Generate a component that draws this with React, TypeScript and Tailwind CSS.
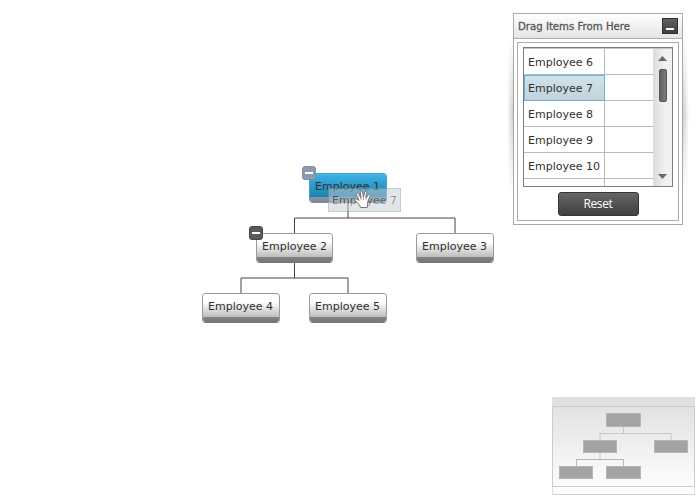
import React from "react";

const font = "font-['DejaVu_Sans','Liberation_Sans',sans-serif]";

type NodeProps = { label: string; place: string; collapse?: boolean; active?: boolean };

function OrgNode({ label, place, collapse, active }: NodeProps) {
  return (
    <div className={`absolute h-[30px] ${place}`}>
      <div
        className={`flex h-full w-full flex-col overflow-hidden rounded-[4px] border ${
          active ? "border-[#4c9fc6] border-b-[#7d8b9b]" : "border-[#999] border-b-[#777]"
        }`}
      >
        <div
          className={`flex h-[23px] items-center pl-[5px] bg-linear-to-b ${
            active ? "from-[#3db3e8] to-[#1b82ac]" : "from-white from-35% to-[#bdbdbd]"
          }`}
        >
          <Label text={label} />
        </div>
        <div className={`flex-1 bg-linear-to-b ${active ? "from-[#8695a7] to-[#7b899a]" : "from-[#858383] to-[#777474]"}`} />
      </div>
      {collapse && (
        <div
          className={`absolute -left-[7px] -top-[7px] flex h-[14px] w-[14px] items-center justify-center rounded-[3px] border ${
            active ? "border-[#8291a3] bg-[#8c9bad]" : "border-[#484848] bg-[#5a5a5a]"
          }`}
        >
          <div className="h-[2px] w-[8px] bg-white" />
        </div>
      )}
    </div>
  );
}

function Label({ text, color = "#303030" }: { text: string; color?: string }) {
  return (
    <svg width="66" height="16" className="block shrink-0 overflow-visible">
      <text x="0" y="12" fontSize="11" fill={color} textLength={text.length > 10 ? 72 : 65} lengthAdjust="spacing">
        {text}
      </text>
    </svg>
  );
}

function Hand() {
  return (
    <svg className="absolute left-[354px] top-[190px]" width="18" height="18" viewBox="0 0 18 18">
      <path
        d="M6.5 17.5 L5.5 15 L1.2 10.5 C.2 9.3 1.6 8.2 2.8 9 L5 10.5 L2.5 4.5 C2 3 3.8 2.3 4.5 3.7 L7 8 L6.3 2 C6.2 .5 8.2 .3 8.5 1.8 L9.5 7.5 L10.5 2.3 C10.8 .9 12.5 1.2 12.4 2.7 L12 8 L14.5 4.7 C15.4 3.6 16.8 4.5 16.2 5.8 L13.8 11.5 L13.2 17.5 Z"
        fill="#fff"
        stroke="#777"
        strokeWidth="1"
        strokeLinejoin="round"
      />
      <path d="M7 8v2 M9.5 7.5v2.5 M12 8v2" stroke="#999" strokeWidth=".8" />
    </svg>
  );
}

function Row({ label, active }: { label: string; active?: boolean }) {
  return (
    <div className="flex h-[26px] shrink-0">
      <div
        className={`flex w-[81px] shrink-0 items-center border-b border-r pl-[4px] ${
          active
            ? "border-[#65b7ce] bg-linear-to-b from-[#cee4ec] to-[#c2d2da] shadow-[inset_1px_1px_0_#65b7ce]"
            : "border-[#bababa]"
        }`}
      >
        {label && <Label text={label} />}
      </div>
      <div className="flex-1 border-b border-[#bababa]" />
    </div>
  );
}

function Palette() {
  return (
    <div className="absolute left-[513px] top-[13px] flex h-[212px] w-[170px] flex-col border border-[#aaa] bg-white">
      <div className="absolute -left-[7px] top-[20px] h-[160px] w-[6px] bg-linear-to-l from-black/20 to-transparent mask-y-from-50% mask-y-to-100%" />
      <div className="absolute -right-[7px] top-[20px] h-[160px] w-[6px] bg-linear-to-r from-black/20 to-transparent mask-y-from-50% mask-y-to-100%" />
      <div className="flex h-[25px] shrink-0 items-center justify-between border-b border-[#aaa] bg-linear-to-b from-white to-[#e4e4e4] pl-[4px] pr-[4px]">
        <svg width="120" height="18" className="block overflow-visible">
          <text x="0" y="13" fontSize="11" fill="#555" stroke="#555" strokeWidth=".3" textLength="112" lengthAdjust="spacingAndGlyphs">
            Drag Items From Here
          </text>
        </svg>
        <button className="flex h-[16px] w-[16px] items-end justify-center border border-[#303030] bg-linear-to-b from-[#626262] to-[#3e3e3e] pb-[3px]">
          <span className="h-[2px] w-[8px] bg-white" />
        </button>
      </div>
      <div className="mx-[3px] mb-[3px] mt-[3px] flex flex-1 flex-col items-center border border-[#aaa] pt-[4px]">
        <div className="flex h-[140px] w-[150px] shrink-0 border border-[#7d7d7d]">
          <div className="flex w-[129px] flex-col overflow-hidden border-t border-[#c6c6c6]">
            <Row label="Employee 6" />
            <Row label="Employee 7" active />
            <Row label="Employee 8" />
            <Row label="Employee 9" />
            <Row label="Employee 10" />
            <Row label="" />
          </div>
          <div className="flex flex-1 flex-col items-center border-t border-[#c6c6c6] bg-linear-to-r from-[#dadada] to-[#f1f1f1] to-60%">
            <svg width="9" height="5" className="mt-[7px]">
              <path d="M0 5 4.5 0 9 5Z" fill="#686868" />
            </svg>
            <div className="mt-[8px] h-[33px] w-[8px] rounded-[2px] border border-[#555] bg-linear-to-r from-[#606060] to-[#7c7c7c]" />
            <svg width="9" height="5" className="mb-[7px] mt-auto">
              <path d="M0 0H9L4.5 5Z" fill="#686868" />
            </svg>
          </div>
        </div>
        <button className="mt-[5px] flex h-[24px] w-[81px] shrink-0 items-center justify-center rounded-[3px] border border-[#353535] bg-linear-to-b from-[#656565] to-[#414141] font-['Open_Sans',sans-serif] text-[12px] tracking-[-0.35px] leading-none text-white">
          Reset
        </button>
      </div>
    </div>
  );
}

function Overview() {
  return (
    <div className="absolute left-[552px] top-[397px] flex h-[98px] w-[143px] flex-col border border-[#e0e0e0] border-b-[#d2d2d2] bg-linear-to-b from-[#dfdfdf] to-white">
      <div className="h-[8px] shrink-0" />
      <div className="-mx-px h-[81px] shrink-0 border border-[#cbcbcb]">
        <svg width="141" height="79" className="block">
          <path d="M70.5 20v6M47 26.5H118V34M47 26v8M47 46v7" fill="none" stroke="#c7c7c7" />
          <path d="M23.5 59V52.5H70.5V59" fill="none" stroke="#b5b5b5" />
          <g fill="#a3a3a3" stroke="#b5b5b5">
            <rect x="53.5" y="6.5" width="34" height="13" />
            <rect x="30.5" y="33.5" width="33" height="12" />
            <rect x="101.5" y="33.5" width="33" height="12" />
            <rect x="6.5" y="59.5" width="33" height="12" />
            <rect x="53.5" y="59.5" width="34" height="12" />
          </g>
        </svg>
      </div>
    </div>
  );
}

export default function App() {
  return (
    <div className={`relative h-[496px] w-[696px] overflow-hidden bg-white ${font}`}>
      <svg className="absolute left-0 top-0" width="500" height="330">
        <path d="M348 203V218M294.5 234V218H455V234M294.5 263V278M241 294V278H348V294" fill="none" stroke="#444" />
      </svg>
      <OrgNode label="Employee 1" place="left-[309px] top-[173px] w-[78px]" collapse active />
      <OrgNode label="Employee 2" place="left-[256px] top-[233px] w-[77px]" collapse />
      <OrgNode label="Employee 3" place="left-[416px] top-[233px] w-[78px]" />
      <OrgNode label="Employee 4" place="left-[202px] top-[293px] w-[78px]" />
      <OrgNode label="Employee 5" place="left-[309px] top-[293px] w-[78px]" />
      <div className="absolute left-[328px] top-[188px] flex h-[24px] w-[73px] items-center border border-[#849aa3] bg-[#c3cdd2] pl-[3px] opacity-50">
        <Label text="Employee 7" />
      </div>
      <Hand />
      <Palette />
      <Overview />
    </div>
  );
}
